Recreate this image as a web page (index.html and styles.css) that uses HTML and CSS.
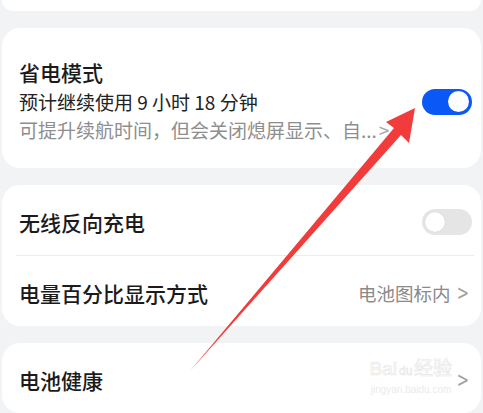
FILE: index.html
```html
<!DOCTYPE html>
<html lang="zh-CN">
<head>
    <meta charset="UTF-8">
    <meta name="viewport" content="width=device-width, initial-scale=1.0">
    <title>电池</title>
    <link rel="stylesheet" href="styles.css">
</head>
<body>
    <div class="page">
        <div class="card card-top"></div>

        <div class="card">
            <div class="row row-tall">
                <div class="row-text">
                    <div class="title">省电模式</div>
                    <div class="sub">预计继续使用 9 小时 18 分钟</div>
                    <div class="hint">可提升续航时间，但会关闭熄屏显示、自...<span class="hint-arrow">&gt;</span></div>
                </div>
                <div class="switch on"><span class="knob"></span></div>
            </div>
        </div>

        <div class="card">
            <div class="row">
                <div class="title">无线反向充电</div>
                <div class="switch"><span class="knob"></span></div>
            </div>
            <div class="divider"></div>
            <div class="row">
                <div class="title">电量百分比显示方式</div>
                <div class="value">电池图标内 <span class="chev">&gt;</span></div>
            </div>
        </div>

        <div class="card">
            <div class="row">
                <div class="title">电池健康</div>
                <div class="value"><span class="chev">&gt;</span></div>
            </div>
        </div>

        <div class="watermark">
            <div class="wm-logo">Bai<span class="wm-du">du</span>经验</div>
            <div class="wm-url">jingyan.baidu.com</div>
        </div>

        <svg class="arrow" width="483" height="413" viewBox="0 0 483 413">
            <polygon points="415,108 409,143 401,135 190,371 394,128 386,122" fill="#f23b3b"/>
        </svg>
    </div>
</body>
</html>
```

FILE: styles.css
```css
* {
    box-sizing: border-box;
}

body {
    margin: 0;
    background-color: #f1f3f5;
    font-family: "Noto Sans CJK SC", "Noto Sans", sans-serif;
    overflow: hidden;
}

.page {
    position: relative;
    height: 413px;
    padding: 0 2px;
    display: flex;
    flex-direction: column;
    gap: 17px;
}

.card {
    background: #ffffff;
    border-radius: 18px;
}

.card-top {
    height: 15px;
    border-radius: 0 0 18px 18px;
}

.row {
    height: 70px;
    display: flex;
    align-items: center;
    justify-content: space-between;
    padding: 3px 9px 0 17px;
}

.row-tall {
    height: 140px;
    padding-top: 7px;
}

.title {
    font-size: 21px;
    font-weight: 500;
    line-height: 28px;
    color: #1b1b1b;
}

.row-text .title {
    margin-top: -2px;
}

.sub {
    font-size: 19px;
    line-height: 28px;
    margin-top: 2px;
    color: #222;
}

.hint {
    font-size: 19px;
    line-height: 28px;
    color: #8e8e8e;
    white-space: nowrap;
}

.hint-arrow {
    margin-left: 2px;
    color: #aaa;
}

.switch {
    position: relative;
    width: 50px;
    height: 26px;
    border-radius: 13px;
    background: #e5e5e5;
    flex-shrink: 0;
}

.switch .knob {
    position: absolute;
    top: 3px;
    left: 3px;
    width: 20px;
    height: 20px;
    border-radius: 50%;
    background: #fff;
    box-shadow: 0 0 1px rgba(0,0,0,0.2);
}

.switch.on {
    background: #0a59f7;
}

.switch.on .knob {
    left: 26px;
    width: 21px;
    height: 21px;
    top: 2.5px;
}

.divider {
    height: 1px;
    margin: 0 7px 0 14px;
    background: #ececec;
}

.value {
    font-size: 18.5px;
    color: #8a8a8a;
    display: flex;
    align-items: center;
    gap: 4px;
}

.chev {
    font-family: "DejaVu Sans", sans-serif;
    font-size: 21px;
    color: #a0a0a0;
    transform: scaleX(0.7);
}

.watermark {
    position: absolute;
    left: 366px;
    top: 356px;
    width: 90px;
    text-align: center;
    pointer-events: none;
}

.wm-logo {
    font-family: "Liberation Sans", sans-serif;
    font-size: 19px;
    font-weight: normal;
    line-height: 26px;
    white-space: nowrap;
    color: #fdfdfd;
    -webkit-text-stroke: 0.6px #e6e6e6;
}

.wm-du {
    font-size: 12px;
    margin: 0 2px;
}

.wm-url {
    font-family: "Liberation Sans", sans-serif;
    font-size: 10px;
    line-height: 12px;
    color: #ebebeb;
}

.arrow {
    position: absolute;
    left: 0;
    top: 0;
    pointer-events: none;
}
```
